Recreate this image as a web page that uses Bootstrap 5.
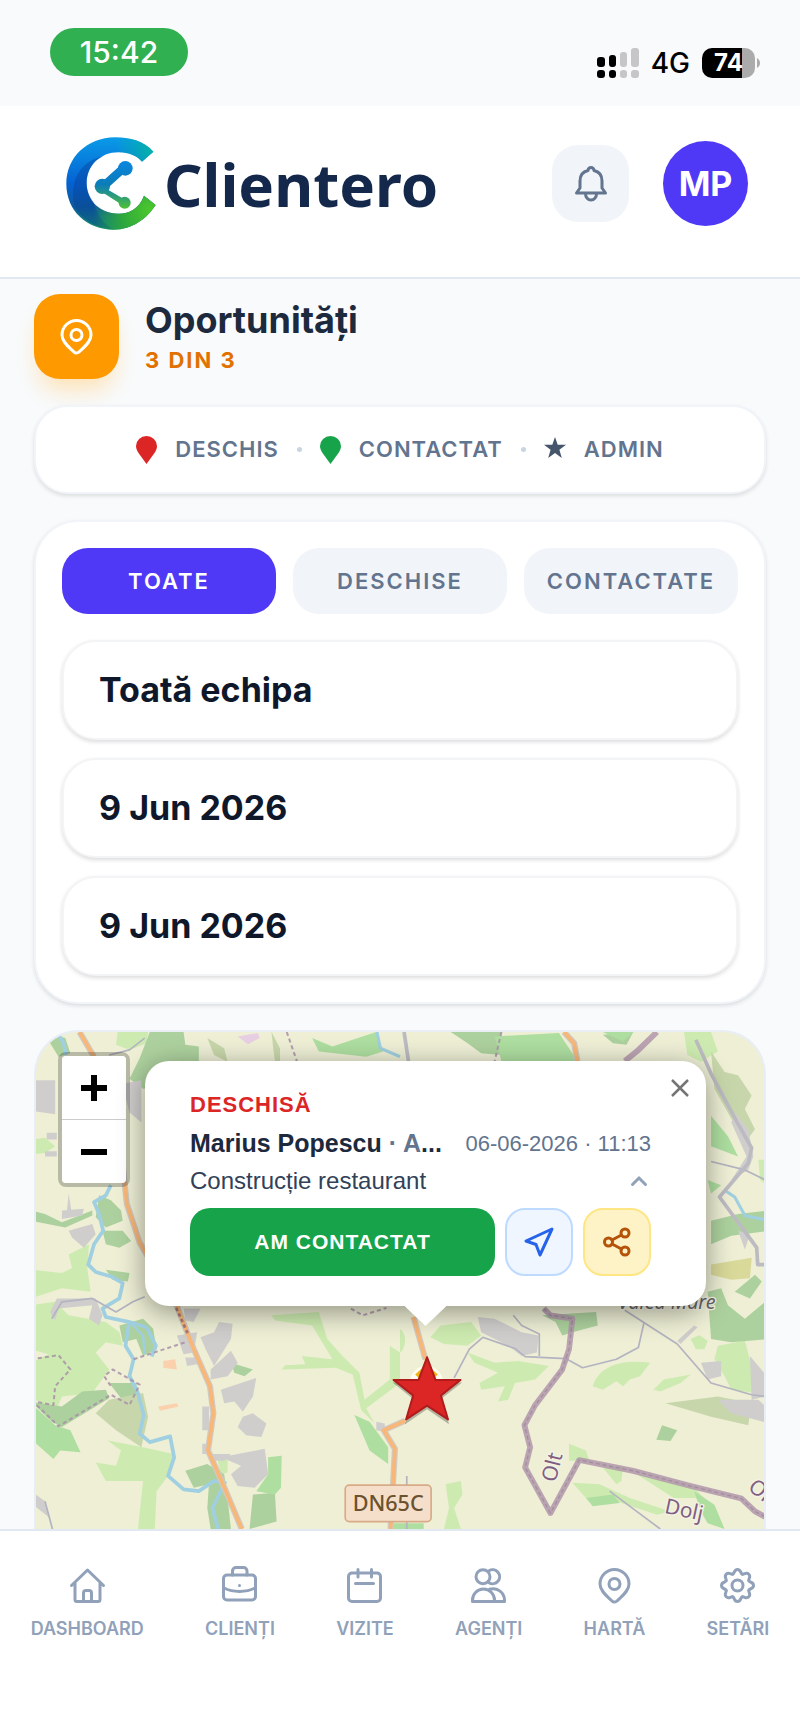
<!DOCTYPE html>
<html lang="ro">
<head>
    <meta charset="UTF-8">
    <meta name="viewport" content="width=device-width, initial-scale=1.0">
    <title>Clientero - Oportunități</title>
    <link href="https://cdn.jsdelivr.net/npm/bootstrap@5.3.0/dist/css/bootstrap.min.css" rel="stylesheet">
    <style>
        body { font-family: Inter, "Liberation Sans", sans-serif; background: #f8fafc; color: #1d293d; }
        svg { display: block; flex: none; overflow: visible; }
        .line-icon { fill: none; stroke: currentColor; stroke-width: 3; stroke-linecap: round; stroke-linejoin: round; }

        /* Bara de stare */
        .status-bar { height: 106px; padding: 28px 40px 28px 50px; background: #f9fafc; }
        .clock { height: 48px; width: 138px; border-radius: 24px; background: #30b050; color: #fff; font-size: 30px; font-weight: 500; }
        .network { font-size: 28px; font-weight: 500; line-height: 30px; color: #000; }
        .battery { width: 53px; height: 30px; border-radius: 10px; background: linear-gradient(90deg, #000 75%, #ababab 75%); color: #fff; font-size: 24px; font-weight: 700; line-height: 30px; }

        /* Antet */
        .app-header { height: 173px; padding: 0 52px 16px 66px; background: #fff; border-bottom: 2px solid #e2e8f0; gap: 34px; }
        .brand { gap: 8px; color: #14284b; font-family: "Noto Sans", sans-serif; font-size: 60px; font-weight: 700; line-height: 64px; }
        .bell-btn { width: 77px; height: 77px; border: 0; border-radius: 26px; background: #f1f5f9; color: #62748e; }
        .avatar { width: 85px; height: 85px; border: 0; background: #4f39f6; color: #fff; font-size: 34px; font-weight: 700; }

        /* Continut */
        .page { gap: 26px; padding: 15px 34px 0; }
        .page-head { gap: 26px; }
        .page-icon { width: 85px; height: 85px; border-radius: 26px; background: #fe9a00; color: #fff; box-shadow: 0 16px 24px -6px #fee1b2; }
        .page-title { font-size: 36px; font-weight: 700; line-height: 44px; }
        .page-count { font-size: 22px; font-weight: 700; line-height: 36px; letter-spacing: 2px; color: #e17100; }
        .panel { background: #fff; border: 2px solid #f1f4f8; box-shadow: 0 2px 4px rgba(0, 0, 0, .12); }
        .legend-bar { height: 89px; border-radius: 34px; gap: 18px; font-size: 22px; font-weight: 600; letter-spacing: 1px; color: #62748e; }
        .legend-bar i { width: 5px; height: 5px; border-radius: 50%; background: #cad5e2; }
        .filters { border-radius: 44px; padding: 26px; gap: 26px; }
        .tabs-row { gap: 17px; }
        .tab-btn { flex: 1 1 0; height: 66px; padding: 0; border: 0; border-radius: 26px; background: #f1f5f9; color: #62748e; font-size: 22px; font-weight: 600; letter-spacing: 2px; }
        .tab-btn.active { background: #4f39f6; color: #fff; }
        .fields { gap: 18px; }
        .field { height: 100px; padding: 0 35px 2px; border: 2px solid #f3f4f6; border-radius: 34px; background: #fff; box-shadow: 0 2px 4px rgba(0, 0, 0, .14); color: #0f172b; font-size: 34px; font-weight: 700; }
        select.field { appearance: none; }

        /* Harta */
        .map-box { min-height: 498px; border: 2px solid #e9eef5; border-bottom: 0; border-radius: 44px 44px 0 0; background: #eeefd5; }
        .zoom-ctl { top: 20px; left: 22px; width: 72px; border: 4px solid rgba(0, 0, 0, .22); border-radius: 8px; background-clip: padding-box; }
        .zoom-ctl button { height: 63px; border: 0; background: #fff; color: #000; }
        .zoom-ctl button:first-child { height: 64px; border-bottom: 1px solid #ccc; border-radius: 4px 4px 0 0; }
        .zoom-ctl button:last-child { border-radius: 0 0 4px 4px; }
        .map-popup { top: 29px; left: 109px; right: 58px; padding: 26px 55px 30px 45px; border-radius: 24px; background: #fff; box-shadow: 0 6px 28px rgba(0, 0, 0, .4); font-family: "Liberation Sans", sans-serif; }
        .popup-tip { top: 100%; left: 50%; width: 42px; height: 20px; margin-left: -21px; background: #fff; clip-path: polygon(0 0, 100% 0, 50% 100%); }
        .close-btn { top: 11px; right: 10px; width: 32px; height: 32px; color: #757575; }
        .state { font-size: 22px; font-weight: 700; line-height: 36px; letter-spacing: 1px; color: #dc2626; }
        .person { font-size: 25px; font-weight: 700; line-height: 40px; }
        .person span, .when { color: #62748e; }
        .when { font-size: 22px; }
        .subject { font-size: 24px; line-height: 36px; color: #314158; }
        .popup-actions { gap: 10px; margin-top: 9px; }
        .done-btn { height: 68px; border: 0; border-radius: 20px; background: #16a34a; color: #fff; font-size: 21px; font-weight: 700; letter-spacing: 1px; }
        .act-btn { width: 68px; height: 68px; border: 2px solid #bedbff; border-radius: 20px; background: #eff6ff; color: #2563eb; }
        .act-btn.share { border-color: #fee685; background: #fef3c6; color: #b45309; }

        /* Navigare jos */
        .bottom-nav { height: 204px; padding-top: 37px; background: #fff; border-top: 2px solid #e2e8f0; }
        .bottom-nav a { gap: 13px; color: #90a1b9; font-size: 18px; font-weight: 600; line-height: 26px; text-decoration: none; }
    </style>
</head>
<body class="d-flex flex-column min-vh-100">
    <!-- Bara de stare -->
    <div class="status-bar d-flex justify-content-between align-items-start">
        <div class="clock d-flex justify-content-center align-items-center">15:42</div>
        <div class="d-flex align-items-center mt-auto">
            <svg width="42" height="30" viewBox="0 0 42 30">
                <g fill="#000"><rect x="0" y="9" width="8" height="10" rx="3"/><rect x="12" y="7" width="7" height="12" rx="3"/><rect x="0" y="22" width="8" height="8" rx="3"/><rect x="12" y="22" width="7" height="8" rx="3"/></g>
                <g fill="#c6c6c8"><rect x="23" y="4" width="7" height="15" rx="3"/><rect x="34" y="0" width="8" height="19" rx="3"/><rect x="23" y="22" width="7" height="8" rx="3"/><rect x="34" y="22" width="8" height="8" rx="3"/></g>
            </svg>
            <span class="network ms-2 me-2 ps-1 pe-1">4G</span>
            <span class="battery text-center">74</span>
            <svg width="5" height="10" viewBox="0 0 5 10"><path d="M2 0C6 2 6 8 2 10Z" fill="#ababab"/></svg>
        </div>
    </div>

    <!-- Antet -->
    <header class="app-header d-flex align-items-center">
        <a href="#" class="brand d-flex align-items-center text-decoration-none me-auto">
            <svg width="90" height="93" viewBox="78 54 270 279">
                <defs>
                    <linearGradient id="ringBase" x1="0" y1="0" x2="0" y2="1">
                        <stop offset="0" stop-color="#0a9be8"/><stop offset=".5" stop-color="#0561d2"/><stop offset=".75" stop-color="#0d5a9c"/><stop offset="1" stop-color="#15916a"/>
                    </linearGradient>
                    <radialGradient id="ringTeal" gradientUnits="userSpaceOnUse" cx="345" cy="95" r="120">
                        <stop offset="0" stop-color="#04b5a4"/><stop offset="1" stop-color="#04b5a4" stop-opacity="0"/>
                    </radialGradient>
                    <radialGradient id="ringGreen" gradientUnits="userSpaceOnUse" cx="330" cy="275" r="170">
                        <stop offset="0" stop-color="#4cc82c"/><stop offset=".5" stop-color="#2fa83c"/><stop offset="1" stop-color="#2fa83c" stop-opacity="0"/>
                    </radialGradient>
                    <linearGradient id="nodes" gradientUnits="userSpaceOnUse" x1="0" y1="126" x2="0" y2="268">
                        <stop offset="0" stop-color="#0a86e0"/><stop offset=".5" stop-color="#0c7cb8"/><stop offset="1" stop-color="#4fc035"/>
                    </linearGradient>
                </defs>
                <path d="M340 98C310 65 270 55 225 55C140 57 79 115 79 195C79 275 140 332 222 332C275 332 320 300 347 258L312 230C298 268 268 284 236 284C180 284 140 245 140 193C140 140 180 100 236 100C268 100 292 112 306 128Z" fill="url(#ringBase)"/>
                <path d="M190 112C120 125 85 190 105 265C125 300 165 328 222 331C190 315 170 285 160 249C150 235 140 215 140 193C140 155 160 125 190 112Z" fill="#083f96" opacity=".4"/>
                <path d="M340 98C310 65 270 55 225 55L230 100C268 100 292 112 306 128Z" fill="url(#ringTeal)"/>
                <path d="M160 249C178 274 205 284 236 284C268 284 298 268 312 230L347 258C320 300 275 332 222 332C180 331 145 318 120 290Z" fill="url(#ringGreen)"/>
                <g fill="url(#nodes)"><path d="M178 196L242 138L260 156L200 210L258 244L250 260L180 215Z"/><circle cx="256" cy="148" r="22"/><circle cx="187" cy="202" r="23"/><circle cx="254" cy="251" r="18"/></g>
            </svg>
            <span>Clientero</span>
        </a>
        <button type="button" class="bell-btn d-flex justify-content-center align-items-center p-0" aria-label="Notificări">
            <svg class="line-icon" width="36" height="36" viewBox="0 0 36 36"><path d="M3.500 27L7 22V15C7 9 10.500 5.500 15 4.500A3 3 0 0 1 21 4.500C25.500 5.500 29 9 29 15V22L32.500 27ZM12.500 28a5.500 6 0 0 0 11 0"/></svg>
        </button>
        <button type="button" class="avatar rounded-circle p-0">MP</button>
    </header>

    <main class="page flex-grow-1 d-flex flex-column">
        <div class="page-head d-flex">
            <div class="page-icon d-flex justify-content-center align-items-center">
                <svg class="line-icon" width="35" height="35" viewBox="0 0 35 35"><path id="pin" d="M17.500 1.500A14.500 14.500 0 0 1 32 16C32 23 25 28 20 33A3.500 3.500 0 0 1 15 33C10 28 3 23 3 16A14.500 14.500 0 0 1 17.500 1.500ZM23 16a5.500 5.500 0 1 1-11 0a5.500 5.500 0 1 1 11 0"/></svg>
            </div>
            <div class="pt-1">
                <h1 class="page-title mb-0">Oportunități</h1>
                <div class="page-count">3 DIN 3</div>
            </div>
        </div>

        <!-- Legenda -->
        <div class="panel legend-bar d-flex justify-content-center align-items-center">
            <svg width="21" height="28" viewBox="0 0 21 28"><path d="M10.500 28L2.500 17C1 14.500 0 12.500 0 10A10.500 10 0 0 1 21 10C21 12.500 20 14.500 18.500 17Z" fill="#dc2626"/></svg>
            <span>DESCHIS</span>
            <i></i>
            <svg width="21" height="28" viewBox="0 0 21 28"><path d="M10.500 28L2.500 17C1 14.500 0 12.500 0 10A10.500 10 0 0 1 21 10C21 12.500 20 14.500 18.500 17Z" fill="#16a34a"/></svg>
            <span>CONTACTAT</span>
            <i></i>
            <svg width="22" height="26" viewBox="0 0 22 26"><path d="M11 0L13.700 7.700H22L15.400 12.700L17.800 21L11 16L4.200 21L6.600 12.700L0 7.700H8.300Z" fill="#45556c"/></svg>
            <span>ADMIN</span>
        </div>

        <!-- Filtre -->
        <form class="panel filters d-flex flex-column">
            <div class="tabs-row d-flex">
                <button type="button" class="tab-btn active">TOATE</button>
                <button type="button" class="tab-btn">DESCHISE</button>
                <button type="button" class="tab-btn">CONTACTATE</button>
            </div>
            <div class="fields d-flex flex-column">
                <select class="field w-100" aria-label="Echipa">
                    <option>Toată echipa</option>
                </select>
                <input type="text" class="field w-100" value="9 Jun 2026" aria-label="De la">
                <input type="text" class="field w-100" value="9 Jun 2026" aria-label="Până la">
            </div>
        </form>

        <!-- Harta -->
        <section class="map-box position-relative flex-grow-1 overflow-hidden">
            <svg class="position-absolute top-0 start-0 w-100 h-100" viewBox="108 62 2184 1470" preserveAspectRatio="xMidYMin slice">
                <!-- pasuni -->
                <g fill="#cdebb0">
                    <path d="M365 62H455L450 95L400 115L360 100ZM108 380L150 375L180 400L150 420L108 425ZM220 720L280 690L275 760L285 830L200 820L108 850V765L200 775L230 760ZM108 870L180 860L220 900L330 920L370 950L380 990L330 980L300 1010L340 1060L290 1130L200 1140L180 1190L108 1140V1040L160 1015L108 1000Z"/>
                    <path d="M335 1270L440 1290L530 1310L510 1380L480 1420L475 1532H425L440 1390L330 1390L300 1335L360 1345L375 1300ZM820 900L960 890L985 970L1030 1020L1080 1070L1095 1150L1170 1090V990L1200 1010V1100L1100 1175L1125 1220L1085 1180L1060 1075L1010 1055L850 1060L860 1048L920 1045L910 1020L1000 1030L940 930L830 915Z"/>
                    <path d="M1320 930L1410 920L1440 960L1400 990L1330 985L1290 965ZM1400 1010L1480 1040L1550 1035L1640 1050L1600 1090L1540 1100L1520 1150L1490 1155L1510 1110L1440 1120L1435 1100L1490 1070L1420 1040ZM1770 1110C1790 1050 1850 1030 1940 1040L1910 1080L1880 1090L1860 1110L1840 1095L1800 1120ZM1950 1120L1980 1090L2060 1075L2030 1100L1970 1125ZM2140 990L2220 975L2240 1050L2250 1130L2180 1120L2160 1080L2130 1030ZM2060 970L2085 958L2110 975L2100 1000L2075 1000Z"/>
                    <path d="M2040 62H2120L2140 120L2090 150L2050 130ZM1335 1400L1380 1390L1385 1430L1360 1470L1380 1532H1330L1345 1470ZM1700 1280L1750 1300L1760 1330L1700 1330ZM1710 1395L1790 1400L1880 1440L2000 1480L1960 1490L1840 1450L1750 1440ZM1800 1350L1860 1345L1855 1390L1840 1400ZM1200 940C1225 960 1215 1000 1200 1010ZM660 1325L690 1325V1365L670 1370Z"/>
                    <path d="M1900 1370L1990 1390L2070 1410L2100 1440L2010 1440ZM2260 440H2292V520L2265 500Z"/>
                </g>
                <!-- paduri -->
                <g fill="#add19e">
                    <path d="M460 62H560L565 100L605 105V150L520 220L440 230L400 200L430 140ZM145 62L210 80L225 125L190 135ZM310 545L345 560L375 590L380 620L330 640L300 610ZM320 650L380 650L405 680L370 700L330 690ZM330 765L400 775L395 800L350 795ZM370 930L440 910L470 940L480 1000L440 1020L420 970L380 980Z"/>
                    <path d="M108 1155L200 1170L260 1125L330 1120L340 1145L200 1230L170 1215ZM340 1100L420 1100L430 1160L390 1165ZM565 1360L630 1340L680 1370L690 1440L700 1532H640L630 1470L635 1400L590 1410ZM765 1430L830 1425L835 1510L755 1532ZM700 1040L765 1060L740 1080L710 1070ZM108 590L150 600L200 625L290 590L290 605L210 640L108 620Z"/>
                    <path d="M1620 900L1780 890L1785 930L1710 950L1680 960L1660 920ZM2110 830L2150 820L2170 870L2220 910L2292 850V970L2180 980L2120 970ZM1975 1225L2020 1240L2000 1272L1958 1268ZM2120 620L2200 600L2292 590V650L2180 665L2120 690ZM2190 830L2250 780L2270 800L2235 850ZM1350 62H1500L1500 130L1440 125L1400 95ZM1800 70L1890 62L1870 100L1830 95Z"/>
                </g>
                <g fill="#aedea0">
                    <path d="M108 1160L180 1225L225 1240L255 1305L195 1300L175 1325L108 1265ZM810 1320L850 1315L848 1410L830 1430L775 1420L810 1370ZM1065 1195L1110 1215L1165 1290V1340L1110 1300ZM1180 1515L1270 1515V1532H1180ZM940 80L1000 105L1060 85L1130 62L1150 120L1100 135L960 120ZM1480 75L1670 65L1725 148H1500ZM1800 62H1890L1860 90ZM2120 310L2170 370L2200 430L2120 400ZM1750 1440L1830 1430L1850 1455L1770 1465ZM2070 1420L2130 1460L2160 1532L2110 1515L2090 1480ZM2110 500L2150 515L2120 540Z"/>
                </g>
                <g fill="#c8d7ab">
                    <path d="M340 1150L440 1130L455 1200L435 1290L360 1240L300 1190ZM630 80L680 110L690 150L650 130ZM820 62L845 110V148H830L825 110ZM1985 1160L2140 1140L2240 1160L2230 1225L2120 1200ZM2120 120L2160 180L2200 190L2240 250L2220 290L2250 350L2220 390L2130 230Z"/>
                    <path d="M2120 750L2240 730L2235 790L2180 795L2120 780Z" fill="#d9d99a"/>
                </g>
                <!-- localitati -->
                <g fill="#d0cecd">
                    <path d="M108 205L180 205V305L108 295ZM155 360H185V380H155ZM150 415H185V430H150ZM378 215L435 205V330L400 300ZM220 650L290 630L300 660L265 700L230 670ZM200 590L265 585L260 605L200 615ZM220 540L228 590H215ZM185 850L300 850L320 900L310 930L280 910L290 870L190 880L180 915L165 890Z"/>
                    <path d="M560 880L610 880L590 920L565 915ZM610 965L650 950L665 920L705 925L700 970L675 1010L650 1050L625 1000ZM540 960L600 950L590 1010L560 1015ZM565 1025L600 1025V1045L570 1050ZM640 1060L700 1005L720 1040L690 1080L640 1090ZM670 1120L775 1085L765 1140L735 1185L710 1155L680 1160ZM735 1200L765 1190L805 1220L790 1260L745 1255L720 1230ZM615 1170H635V1240H615ZM615 1280H640V1310H615Z"/>
                    <path d="M670 1320L800 1295L810 1370L770 1410L720 1405L700 1370L730 1345ZM640 1310H700L680 1330H640ZM108 1420L150 1450L165 1500L108 1455ZM1130 1215L1155 1220V1245L1130 1240ZM1430 905L1480 910L1560 950L1610 960L1605 1010L1560 1020L1520 990L1440 950ZM2090 1040L2150 1035L2150 1080L2110 1090ZM2235 1020L2260 1050L2285 1080L2280 1140L2240 1150ZM2140 1150L2260 1150L2292 1180V1220L2180 1190Z"/>
                    <path d="M2070 930L2080 935L2030 985L2020 975ZM2190 300L2230 350L2245 430L2230 470L2180 500L2225 430L2180 330ZM2200 650L2235 660L2220 705Z"/>
                </g>
                <path d="M500 1035L535 1030L540 1060L500 1055ZM485 1170L540 1160L545 1170L490 1182Z" fill="#fbd0ac"/>
                <path d="M720 75L780 65L785 80L750 98Z" fill="#e8cfe4"/>
                <!-- ape -->
                <g fill="none" stroke="#9fcfe0" stroke-width="11" stroke-linejoin="round">
                    <path d="M185 62L205 95L212 130M345 515L330 545L295 565L310 600L322 650L295 690L278 750L300 772L345 785L380 805L370 850L320 880L330 905L400 920L450 935L478 990L465 1022M398 925L388 990L412 1030L400 1080L425 1130L442 1195L430 1250L460 1275L520 1258L532 1320L514 1375L560 1415L605 1420L650 1390L682 1395L645 1470L662 1532"/>
                    <path d="M1132 62L1142 110L1200 135M2160 530L2190 550L2220 605L2292 620" stroke-width="9"/>
                    <path d="M405 925L440 960L445 1015" stroke-width="7"/>
                </g>
                <!-- drumuri -->
                <g fill="none" stroke="#b4b3c0" stroke-width="5" stroke-linejoin="round">
                    <path d="M1360 1085L1405 1000L1445 965L1540 998L1570 1022L1690 1028L1740 1055L1840 1030L1905 995L1922 920M1865 885L2020 985L2120 1100L2240 1135L2292 1142M1535 900L1560 930L1612 955V1020M2120 445L2220 470L2292 505M170 910L200 860L290 850L360 890L410 860L445 845M150 1450L172 1532M340 130L400 115L445 80M1820 1420L1900 1480L1970 1532M1220 1375V1532"/>
                    <path d="M2075 85L2120 185L2195 325L2240 405L2230 450L2145 550L2255 700L2258 750H2292M1212 62L1225 148" stroke-width="11" stroke="#bdbbc2"/>
                </g>
                <path d="M252 62L295 135M378 440L392 570L430 685L540 872L590 1000L638 1110L648 1190L632 1300L670 1385L732 1532M1240 905L1275 1030M1215 1212L1152 1240L1185 1295L1172 1532M1685 62L1715 95L1725 148" fill="none" stroke="#cfcac4" stroke-width="18" stroke-linejoin="round"/>
                <path d="M252 62L295 135M378 440L392 570L430 685L540 872L590 1000L638 1110L648 1190L632 1300L670 1385L732 1532M1240 905L1275 1030M1215 1212L1152 1240L1185 1295L1172 1532M1685 62L1715 95L1725 148" fill="none" stroke="#f9b777" stroke-width="11" stroke-linejoin="round"/>
                <!-- limite administrative -->
                <g fill="none" stroke="#b397ac" stroke-width="17" stroke-linejoin="round" opacity=".85">
                    <path d="M1625 880L1645 900L1710 910L1700 1000L1680 1060L1600 1165L1568 1225L1585 1290L1570 1350L1645 1485L1730 1328L1890 1360L2060 1405L2210 1442L2250 1480L2292 1502M1960 62L1900 120L1865 148"/>
                    <path d="M1625 880L1645 900L1710 910L1700 1000L1680 1060L1600 1165L1568 1225L1585 1290L1570 1350L1645 1485L1730 1328L1890 1360L2060 1405L2210 1442L2250 1480L2292 1502" stroke="#957f95" stroke-width="4" stroke-dasharray="12 8"/>
                    <path d="M108 1030L190 1018L225 1060L180 1110L175 1165L115 1155L190 1228L345 1135L400 1165L430 1105L350 1060L325 1080L345 1110M412 1030L570 978M865 62L895 148M1055 880L1090 900L1160 878M1500 62L1480 148" stroke="#a991a8" stroke-width="6" stroke-dasharray="12 9"/>
                    <path d="M538 878L575 960" stroke="#a06f6f" stroke-width="8" stroke-dasharray="10 8"/>
                </g>
                <!-- etichete -->
                <g font-family="Noto Sans, sans-serif" font-size="62" fill="#7f5f82" stroke="#f4f3e4" stroke-width="8" paint-order="stroke">
                    <text transform="translate(1660 1396) rotate(-76)">Olt</text>
                    <text x="1980" y="1484" transform="rotate(12 1980 1484)">Dolj</text>
                    <text transform="translate(2226 1414) rotate(38)">Olt</text>
                    <text x="1845" y="882" font-size="58" font-style="italic" fill="#666">Valea Mare</text>
                </g>
                <rect x="1038" y="1402" width="254" height="108" rx="12" fill="#f6dfca" stroke="#d8ab88" stroke-width="5"/>
                <text x="1165" y="1479" text-anchor="middle" font-family="Noto Sans, sans-serif" font-size="64" font-weight="500" fill="#6b522f">DN65C</text>
                <!-- marcaj -->
                <circle cx="1278" cy="1100" r="50" fill="#fffdf0"/>
                <path d="M1278 1045L1312 1075L1290 1095H1265L1245 1075Z" fill="#f0b310"/>
                <path d="M1280 1034L1307 1099L1384 1099L1324 1145L1345 1222L1280 1178L1215 1222L1236 1145L1178 1099L1253 1099Z" fill="#000" opacity=".25"/>
                <path d="M1280 1024L1305 1091L1379 1091L1321 1137L1342 1208L1280 1167L1218 1208L1239 1137L1181 1091L1255 1091Z" fill="#dc2626" stroke="#b01c1c" stroke-width="6" stroke-linejoin="round"/>
            </svg>

            <div class="zoom-ctl position-absolute d-flex flex-column">
                <button type="button" class="d-flex justify-content-center align-items-center" aria-label="Mărește">
                    <svg width="26" height="26" viewBox="0 0 26 26"><path d="M0 13H26M13 0V26" stroke="currentColor" stroke-width="6"/></svg>
                </button>
                <button type="button" class="d-flex justify-content-center align-items-center" aria-label="Micșorează">
                    <svg width="26" height="26" viewBox="0 0 26 26"><path d="M0 13H26" stroke="currentColor" stroke-width="6"/></svg>
                </button>
            </div>

            <div class="map-popup position-absolute">
                <div class="popup-tip position-absolute"></div>
                <button type="button" class="close-btn position-absolute btn p-0 border-0 d-flex justify-content-center align-items-center" aria-label="Închide">
                    <svg width="18" height="18" viewBox="0 0 18 18"><path d="M1 1L17 17M17 1L1 17" stroke="currentColor" stroke-width="2.500"/></svg>
                </button>
                <div class="state">DESCHISĂ</div>
                <div class="d-flex align-items-center gap-3">
                    <div class="person flex-fill text-truncate">Marius Popescu <span>· A</span>...</div>
                    <div class="when text-nowrap">06-06-2026 · 11:13</div>
                </div>
                <div class="d-flex justify-content-between align-items-center pe-1">
                    <div class="subject">Construcție restaurant</div>
                    <svg width="16" height="10" viewBox="0 0 16 10"><path d="M1.500 8.500L8 2L14.500 8.500" fill="none" stroke="#90a1b9" stroke-width="3" stroke-linecap="round"/></svg>
                </div>
                <div class="popup-actions d-flex">
                    <button type="button" class="done-btn flex-fill">AM CONTACTAT</button>
                    <button type="button" class="act-btn d-flex justify-content-center align-items-center p-0" aria-label="Navighează">
                        <svg class="line-icon" width="30" height="30" viewBox="0 0 30 30"><path d="M28 2L2 14L12 17.500L16 28Z"/></svg>
                    </button>
                    <button type="button" class="act-btn share d-flex justify-content-center align-items-center p-0" aria-label="Distribuie">
                        <svg class="line-icon" width="28" height="30" viewBox="0 0 28 30"><circle cx="5.500" cy="15" r="4"/><circle cx="22" cy="6" r="4"/><circle cx="22" cy="24" r="4"/><path d="M9 13L18.500 8M9 17L18.500 22"/></svg>
                    </button>
                </div>
            </div>
        </section>
    </main>

    <!-- Navigare jos -->
    <nav class="bottom-nav d-flex justify-content-around align-items-start">
        <a href="#" class="d-flex flex-column align-items-center">
            <svg class="line-icon" width="35" height="35" viewBox="0 0 35 35"><path d="M1.500 17.500L17.500 2L33.500 17.500M5 14.500V31.500a2 2 0 0 0 2 2H28a2 2 0 0 0 2-2V14.500M13.500 33V25a2.500 2.500 0 0 1 2.500-2.500h3a2.500 2.500 0 0 1 2.500 2.500V33"/></svg>
            DASHBOARD
        </a>
        <a href="#" class="d-flex flex-column align-items-center">
            <svg class="line-icon" width="35" height="35" viewBox="0 2 35 35"><rect x="1.500" y="9" width="32" height="25" rx="3.500"/><path d="M10.500 9V5A3.500 3.500 0 0 1 14 1.500H21.500A3.500 3.500 0 0 1 25 5V9M2 22C11 26.500 24 26.500 33 22M17.500 19.500V19.600"/></svg>
            CLIENȚI
        </a>
        <a href="#" class="d-flex flex-column align-items-center">
            <svg class="line-icon" width="35" height="35" viewBox="0 0 35 35"><rect x="1.500" y="5" width="32" height="28.500" rx="3.500"/><path d="M11 1.500V9M24.500 1.500V9M8.500 15.500H26.500"/></svg>
            VIZITE
        </a>
        <a href="#" class="d-flex flex-column align-items-center">
            <svg class="line-icon" width="35" height="35" viewBox="0 0 35 35"><circle cx="12" cy="8.700" r="7"/><path d="M18 2.700A7 7 0 1 1 18 14.700M1.500 33.500V32A11 11 0 0 1 23.500 32V33.500ZM18.500 21.300A11.500 11.500 0 0 1 33.500 32V33.500H24"/></svg>
            AGENȚI
        </a>
        <a href="#" class="d-flex flex-column align-items-center">
            <svg class="line-icon" width="35" height="35" viewBox="0 0 35 35"><use href="#pin"/></svg>
            HARTĂ
        </a>
        <a href="#" class="d-flex flex-column align-items-center">
            <svg class="line-icon" width="35" height="35" viewBox="-17.500 -17.500 35 35">
                <path id="tooth" d="M-4.700-11.400C-2.700-12.200-3.700-16 0-16S2.700-12.200 4.700-11.400"/>
                <use href="#tooth" transform="rotate(45)"/><use href="#tooth" transform="rotate(90)"/><use href="#tooth" transform="rotate(135)"/><use href="#tooth" transform="rotate(180)"/><use href="#tooth" transform="rotate(225)"/><use href="#tooth" transform="rotate(270)"/><use href="#tooth" transform="rotate(315)"/>
                <circle r="5.500"/>
            </svg>
            SETĂRI
        </a>
    </nav>

    <script src="https://cdn.jsdelivr.net/npm/bootstrap@5.3.0/dist/js/bootstrap.bundle.min.js"></script>
</body>
</html>
